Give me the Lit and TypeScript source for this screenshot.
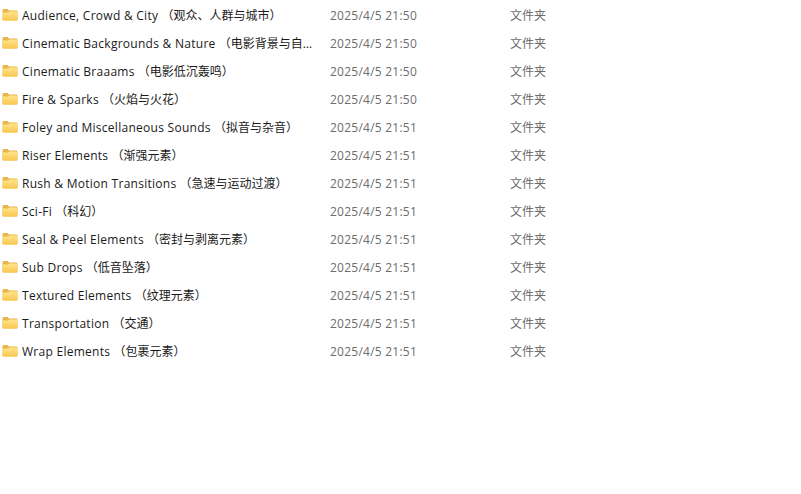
import { LitElement, html, css, svg } from "lit";
import { customElement } from "lit/decorators.js";

const rows: [string, string, string][] = [
  ["Audience, Crowd & City", "（观众、人群与城市）", "21:50"],
  ["Cinematic Backgrounds & Nature", "（电影背景与自然）", "21:50"],
  ["Cinematic Braaams", "（电影低沉轰鸣）", "21:50"],
  ["Fire & Sparks", "（火焰与火花）", "21:50"],
  ["Foley and Miscellaneous Sounds", "（拟音与杂音）", "21:51"],
  ["Riser Elements", "（渐强元素）", "21:51"],
  ["Rush & Motion Transitions", "（急速与运动过渡）", "21:51"],
  ["Sci-Fi", "（科幻）", "21:51"],
  ["Seal & Peel Elements", "（密封与剥离元素）", "21:51"],
  ["Sub Drops", "（低音坠落）", "21:51"],
  ["Textured Elements", "（纹理元素）", "21:51"],
  ["Transportation", "（交通）", "21:51"],
  ["Wrap Elements", "（包裹元素）", "21:51"],
];

const folder = svg`<svg class="icon" width="16" height="12" viewBox="0 0 16 12">
  <defs><linearGradient id="f" x1="0" y1="0" x2="0" y2="1">
    <stop offset="0" stop-color="#fee48e"/><stop offset="1" stop-color="#f8c84e"/>
  </linearGradient></defs>
  <path d="M0.5 1 Q0.5 0 1.5 0 H5.5 L7 1.5 H14.5 Q15.5 1.5 15.5 2.5 V10.5 Q15.5 11.5 14.5 11.5 H1.5 Q0.5 11.5 0.5 10.5 Z" fill="#eab54a"/>
  <path d="M0.5 3.5 H6 L7.5 2.5 H15.5 V10.5 Q15.5 11.5 14.5 11.5 H1.5 Q0.5 11.5 0.5 10.5 Z" fill="url(#f)"/>
</svg>`;

@customElement("app-root")
export class AppRoot extends LitElement {
  static styles = css`
    :host { display: block; width: 801px; height: 494px; background: #fff; overflow: hidden;
      font-family: "Open Sans", "Noto Sans CJK SC", sans-serif; font-size: 12px; }
    .list { display: flex; flex-direction: column; padding-top: 1px; }
    .row { display: grid; grid-template-columns: 330px 180px 60px; height: 28px; align-items: center; }
    .name { display: flex; align-items: center; min-width: 0; color: #1a1a1a; padding-left: 2px; }
    .icon { flex: none; margin-right: 4px; }
    .label { width: 294px; white-space: nowrap; overflow: hidden; text-overflow: ellipsis; }
    .en { letter-spacing: 0.27px; }
    .date { letter-spacing: 0.24px; }
    .date, .type { color: #6d6d6d; }
  `;
  render() {
    return html`<div class="list">${rows.map(([en, zh, t]) => html`
      <div class="row">
        <div class="name">${folder}<span class="label"><span class="en">${en}</span> <span>${zh}</span></span></div>
        <div class="date">2025/4/5 ${t}</div>
        <div class="type">文件夹</div>
      </div>`)}</div>`;
  }
}
